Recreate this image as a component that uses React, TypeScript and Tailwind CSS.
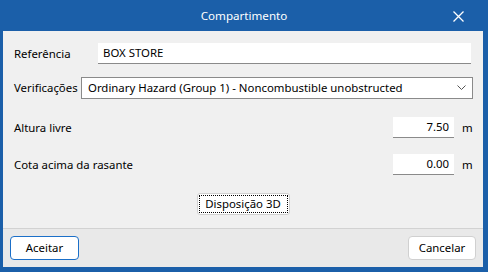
import React from "react";

const font = { fontFamily: '"Noto Sans", "Open Sans", sans-serif' };

export default function App() {
  return (
    <div
      className="w-[488px] h-[272px] bg-[#1b5fa9] flex flex-col pl-[3px] pr-[5px] pb-[5px] text-[11.4px] text-black"
      style={font}
    >
      <div className="h-[31px] flex items-center relative shrink-0">
        <div className="flex-1 text-center text-white text-[11.6px] pl-[2px]">Compartimento</div>
        <svg className="absolute right-[19px] top-[11px]" width="11" height="11" viewBox="0 0 11 11">
          <path d="M0.5 0.5 L10.5 10.5 M10.5 0.5 L0.5 10.5" stroke="white" strokeWidth="1.3" />
        </svg>
      </div>
      <div className="flex-1 bg-[#f0f0f0] flex flex-col">
        <div className="flex items-center mt-[12px] h-[21px] pl-[11px] pr-[12px]">
          <div className="w-[84px] shrink-0">Referência</div>
          <div className="flex-1 h-full bg-white border-b border-[#8a8a8a] flex items-center pl-[5px]">BOX STORE</div>
        </div>
        <div className="flex items-center mt-[13px] h-[22px] pl-[11px] pr-[10px]">
          <div className="w-[67px] shrink-0">Verificações</div>
          <div className="flex-1 h-full bg-white border border-[#8a8a8a] flex items-center pl-[6px] pr-[6px]">
            <span className="flex-1">Ordinary Hazard (Group 1) - Noncombustible unobstructed</span>
            <svg width="9" height="6" viewBox="0 0 9 6">
              <path d="M0.5 0.5 L4.5 4.5 L8.5 0.5" stroke="#555" fill="none" strokeWidth="1" />
            </svg>
          </div>
        </div>
        <div className="flex items-center mt-[18px] h-[21px] pl-[11px]">
          <div className="flex-1">Altura livre</div>
          <div className="w-[61px] h-full bg-white border-b border-[#8a8a8a] flex items-center justify-end pr-[5px]">7.50</div>
          <div className="w-[29px] pl-[8px]">m</div>
        </div>
        <div className="flex items-center mt-[16px] h-[21px] pl-[11px]">
          <div className="flex-1">Cota acima da rasante</div>
          <div className="w-[61px] h-full bg-white border-b border-[#8a8a8a] flex items-center justify-end pr-[5px]">0.00</div>
          <div className="w-[29px] pl-[8px]">m</div>
        </div>
        <div className="flex justify-center mt-[18px]">
          <div className="w-[93px] h-[22px] bg-white border border-[#d0d0d0] rounded-[3px] p-[1px]">
            <div className="w-full h-full border border-dotted border-black flex items-center justify-center">
              Disposição 3D
            </div>
          </div>
        </div>
        <div className="flex-1 mt-[13px] border-t border-[#d2d2d2] bg-[#e9e9e9] flex items-start justify-between pt-[7px] pl-[7px] pr-[7px]">
          <div className="w-[69px] h-[24px] bg-white border border-[#1b6fc8] rounded-[4px] flex items-center justify-center">Aceitar</div>
          <div className="w-[68px] h-[24px] bg-white border border-[#d0d0d0] rounded-[4px] flex items-center justify-center">Cancelar</div>
        </div>
      </div>
    </div>
  );
}
